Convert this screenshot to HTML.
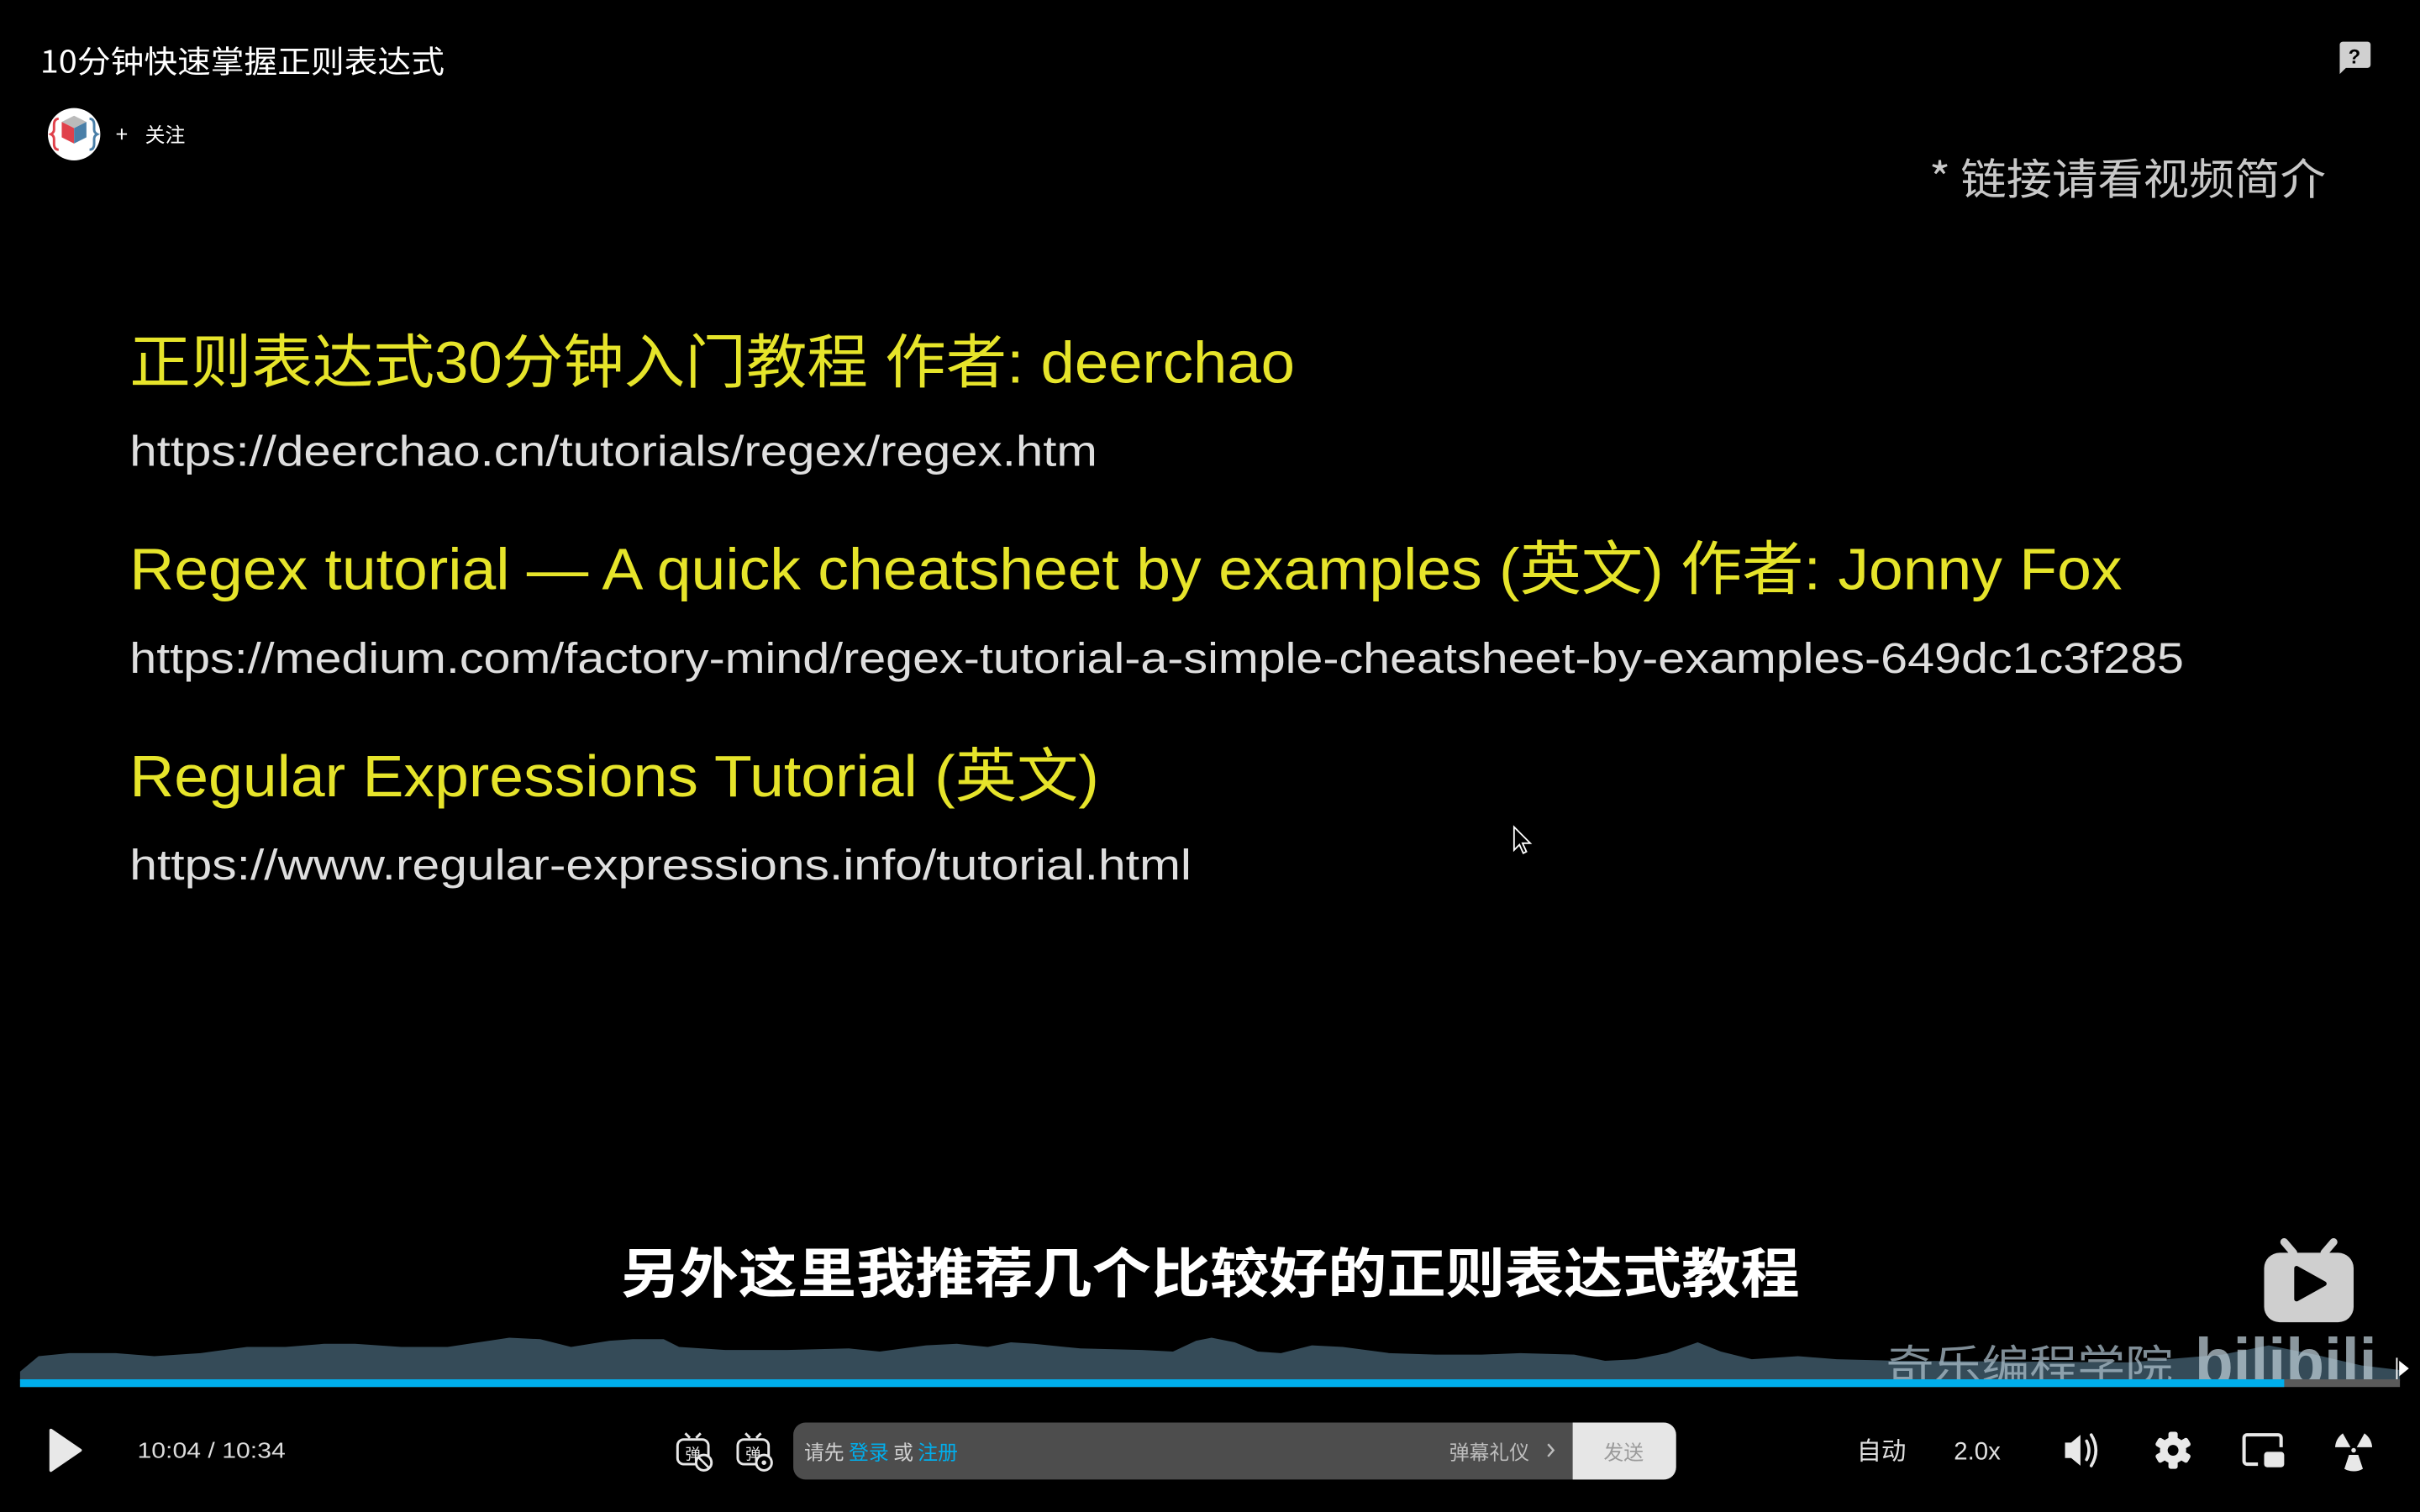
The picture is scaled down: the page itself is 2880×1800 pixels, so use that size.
<!DOCTYPE html>
<html><head><meta charset="utf-8">
<style>
html,body{margin:0;padding:0;background:#000;width:2880px;height:1800px;overflow:hidden}
svg{display:block}
text{font-family:"Liberation Sans","Noto Sans CJK SC",sans-serif}
.cjk{font-family:"Noto Sans CJK SC","Liberation Sans",sans-serif}
</style></head>
<body>
<svg width="2880" height="1800" viewBox="0 0 1568 980" xmlns="http://www.w3.org/2000/svg">
<rect width="1568" height="980" fill="#000"/>

<!-- title -->
<text x="26" y="47" font-size="20" fill="#fff" class="cjk" textLength="262" lengthAdjust="spacingAndGlyphs">10分钟快速掌握正则表达式</text>
<!-- avatar -->
<circle cx="48" cy="87" r="17" fill="#fff"/>
<path d="M40 79 l8-4 8 4 -8 4z" fill="#bbb"/>
<path d="M40 79 l8 4 v10 l-8-4z" fill="#e0414b"/>
<path d="M56 79 l-8 4 v10 l8-4z" fill="#4a7fa8"/>
<path d="M38 77 q-3 0 -3 4 v3 q0 2 -2 3 q2 1 2 3 v3 q0 4 3 4" fill="none" stroke="#e0414b" stroke-width="1.6"/>
<path d="M58 77 q3 0 3 4 v3 q0 2 2 3 q-2 1 -2 3 v3 q0 4 -3 4" fill="none" stroke="#4a7fa8" stroke-width="1.6"/>
<text x="75" y="92" font-size="14" fill="#fff" class="cjk">+</text>
<text x="94" y="92" font-size="13" fill="#fff" class="cjk">关注</text>
<!-- help icon -->
<path d="M1517 27 h17 a2 2 0 0 1 2 2 v13 a2 2 0 0 1 -2 2 h-14 l-4 4 v-19 a2 2 0 0 1 2 -2z" fill="#d0d0d0"/>
<text x="1525.5" y="41" font-size="13" font-weight="bold" fill="#000" text-anchor="middle">?</text>

<!-- slide -->
<text x="1250" y="126" font-size="28" fill="#c8c8c8" class="cjk" textLength="257" lengthAdjust="spacingAndGlyphs">* 链接请看视频简介</text>
<g fill="#e6e42a" class="cjk">
<text x="84" y="248" font-size="38" textLength="755" lengthAdjust="spacingAndGlyphs">正则表达式30分钟入门教程 作者: deerchao</text>
<text x="84" y="382" font-size="38" textLength="1291" lengthAdjust="spacingAndGlyphs">Regex tutorial — A quick cheatsheet by examples (英文) 作者: Jonny Fox</text>
<text x="84" y="516" font-size="38" textLength="628" lengthAdjust="spacingAndGlyphs">Regular Expressions Tutorial (英文)</text>
</g>
<g fill="#dedede" class="cjk">
<text x="84" y="302" font-size="28" textLength="627" lengthAdjust="spacingAndGlyphs">https://deerchao.cn/tutorials/regex/regex.htm</text>
<text x="84" y="436" font-size="28" textLength="1331" lengthAdjust="spacingAndGlyphs">https://medium.com/factory-mind/regex-tutorial-a-simple-cheatsheet-by-examples-649dc1c3f285</text>
<text x="84" y="570" font-size="28" textLength="688" lengthAdjust="spacingAndGlyphs">https://www.regular-expressions.info/tutorial.html</text>
</g>
<!-- cursor -->
<path d="M981 536 v15 l3.5-3.5 2.5 5.5 2-1 -2.5-5.5 h5z" fill="#000" stroke="#fff" stroke-width="1"/>

<!-- subtitle -->
<text x="402" y="838" font-size="35" font-weight="bold" fill="#fff" class="cjk" textLength="764" lengthAdjust="spacingAndGlyphs">另外这里我推荐几个比较好的正则表达式教程</text>

<!-- bilibili tv logo -->
<g fill="#cfcfcf">
<path d="M1480 805 l6 7 M1512 805 l-6 7" stroke="#cfcfcf" stroke-width="5" stroke-linecap="round"/>
<rect x="1467" y="812" width="58" height="45" rx="10"/>
</g>
<path d="M1488 822 l18 10 -18 10z" fill="#000" stroke="#000" stroke-width="3" stroke-linejoin="round"/>

<!-- waveform -->
<path d="M13 895 L13 889 L25 879 L45 877 L75 877 L100 879 L130 877 L160 873 L185 873 L210 871 L230 871 L260 873 L290 873 L310 870 L330 867 L350 868 L370 873 L395 869 L410 868 L430 868 L440 873 L470 875 L510 875 L550 874 L570 876 L600 872 L620 871 L640 873 L655 870 L670 871 L700 874 L740 875 L760 876 L775 869 L785 867 L800 870 L815 876 L830 877 L850 872 L870 873 L900 877 L930 878 L960 878 L985 877 L1020 878 L1040 882 L1060 881 L1080 877 L1100 870 L1115 876 L1135 881 L1165 879 L1190 881 L1230 882 L1380 883 L1440 878 L1470 872 L1500 878 L1530 885 L1555 888 L1555 895 Z" fill="#354b58"/>
<!-- watermark -->
<text x="1222" y="895" font-size="28" fill="#a9bcc8" fill-opacity="0.75" class="cjk" textLength="186" lengthAdjust="spacingAndGlyphs">奇乐编程学院</text>
<text x="1422" y="898" font-size="44" font-weight="bold" fill="#b9c9d3" fill-opacity="0.75" textLength="118" lengthAdjust="spacingAndGlyphs">bilibili</text>
<!-- progress -->
<rect x="13" y="894" width="1542" height="5" fill="#5a5a5a"/>
<rect x="13" y="894" width="1467" height="5" fill="#00aeec"/>
<path d="M1553 880 v14 M1555 883 l5 4 -5 4z" stroke="#fff" stroke-width="1" fill="#fff"/>

<!-- controls -->
<path d="M33 927 l19 13 -19 13z" fill="#e8e8e8" stroke="#e8e8e8" stroke-width="2" stroke-linejoin="round"/>
<text x="89" y="945" font-size="14" fill="#dcdcdc" textLength="96" lengthAdjust="spacingAndGlyphs">10:04 / 10:34</text>

<g fill="none" stroke="#e8e8e8" stroke-width="1.6">
<rect x="439" y="933" width="20" height="16" rx="4"/>
<path d="M444 929 l3 3 M454 929 l-3 3"/>
<rect x="478" y="933" width="20" height="16" rx="4"/>
<path d="M483 929 l3 3 M493 929 l-3 3"/>
</g>
<text x="449" y="946" font-size="10" fill="#e8e8e8" text-anchor="middle" class="cjk">弹</text>
<text x="488" y="946" font-size="10" fill="#e8e8e8" text-anchor="middle" class="cjk">弹</text>
<circle cx="456" cy="948" r="5" fill="#000" stroke="#e8e8e8" stroke-width="1.6"/>
<path d="M453 945 l6 6" stroke="#e8e8e8" stroke-width="1.4"/>
<circle cx="495" cy="948" r="5" fill="#000" stroke="#e8e8e8" stroke-width="1.6"/>
<circle cx="495" cy="948" r="1.5" fill="#e8e8e8"/>

<rect x="514" y="922" width="572" height="37" rx="8" fill="#4d4d4d"/>
<path d="M1019 922 h59 a8 8 0 0 1 8 8 v21 a8 8 0 0 1 -8 8 h-59z" fill="#e6e6e6"/>
<text x="521" y="946" font-size="13" class="cjk"><tspan fill="#cfcfcf">请先 </tspan><tspan fill="#00aeec">登录</tspan><tspan fill="#cfcfcf"> 或 </tspan><tspan fill="#00aeec">注册</tspan></text>
<text x="939" y="946" font-size="13" fill="#bdbdbd" class="cjk">弹幕礼仪</text>
<path d="M1003 936 l3.5 4 -3.5 4" fill="none" stroke="#bdbdbd" stroke-width="1.3"/>
<text x="1052" y="946" font-size="13" fill="#9a9a9a" text-anchor="middle" class="cjk">发送</text>

<text x="1203" y="946" font-size="16" fill="#e0e0e0" class="cjk">自动</text>
<text x="1266" y="946" font-size="16" fill="#e0e0e0">2.0x</text>
<!-- volume -->
<path d="M1338 935 h4 l6 -5 v20 l-6 -5 h-4z" fill="#e8e8e8"/>
<path d="M1352 934 q3 6 0 12 M1355 930 q6 10 0 20" fill="none" stroke="#e8e8e8" stroke-width="2" stroke-linecap="round"/>
<!-- settings -->
<g transform="translate(1408 940)">
<circle r="8.5" fill="#e8e8e8"/>
<g fill="#e8e8e8"><rect x="-3" y="-12" width="6" height="24" rx="1.5"/><rect x="-3" y="-12" width="6" height="24" rx="1.5" transform="rotate(60)"/><rect x="-3" y="-12" width="6" height="24" rx="1.5" transform="rotate(120)"/></g>
<circle r="3.5" fill="#000"/>
</g>
<!-- pip -->
<path d="M1463 949 h-7 a2 2 0 0 1 -2 -2 v-15 a2 2 0 0 1 2 -2 h20 a2 2 0 0 1 2 2 v6" fill="none" stroke="#e8e8e8" stroke-width="2.2"/>
<rect x="1467" y="941" width="13" height="10" rx="2" fill="#e8e8e8"/>
<!-- fullscreen-ish icon -->
<g transform="translate(1525 940)" fill="#e8e8e8">
<path d="M-2 -2 L-7 -11 A12 12 0 0 0 -12 -2z"/>
<path d="M2 -2 L7 -11 A12 12 0 0 1 12 -2z"/>
<path d="M-3 3 L3 3 L6 12 A12 12 0 0 1 -6 12z"/>
<circle r="1.5"/>
</g>
</svg>
</body></html>
